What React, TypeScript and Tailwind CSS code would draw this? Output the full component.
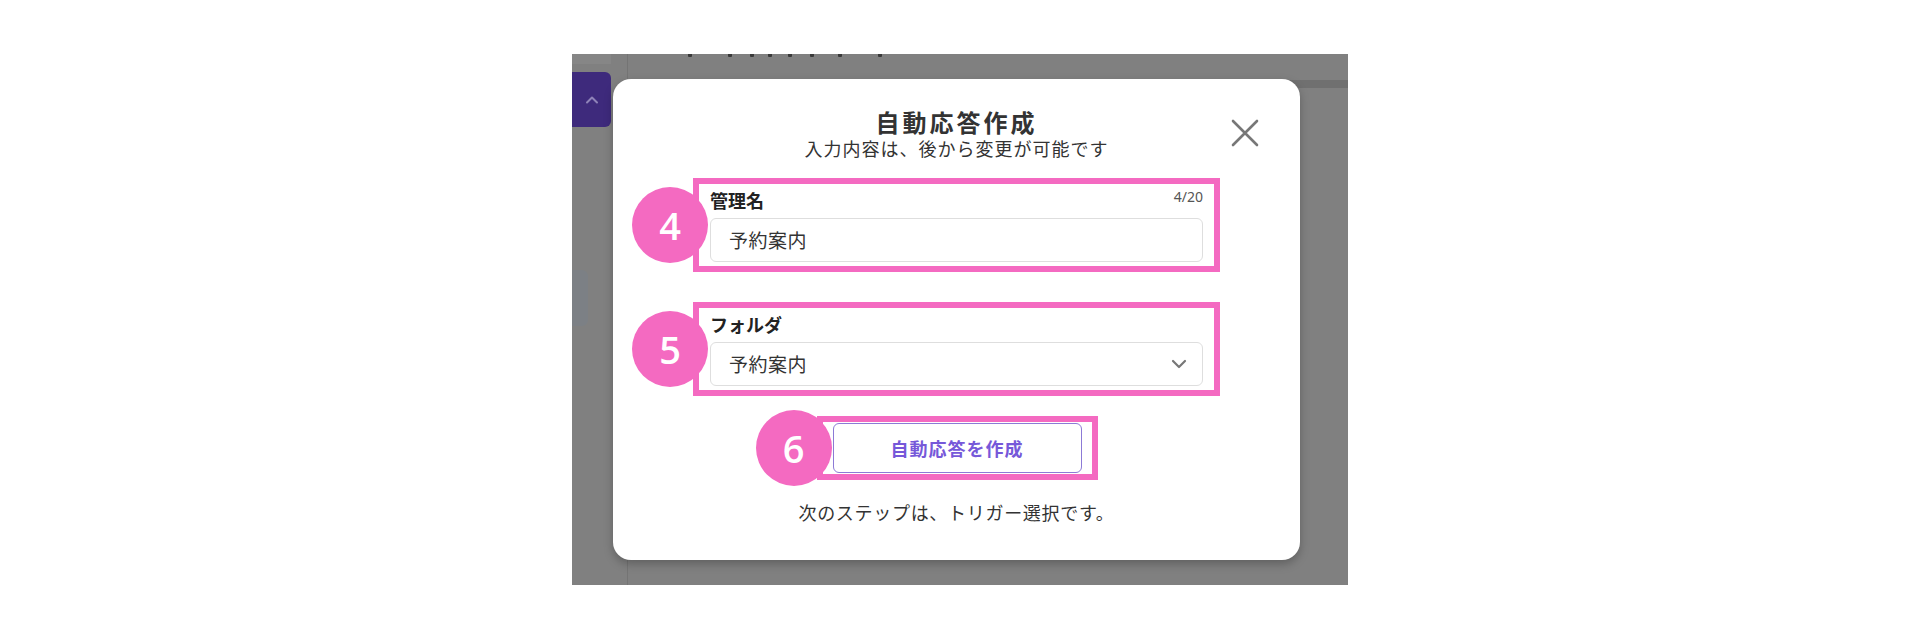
import React from "react";

const jp = "font-['Noto_Sans_CJK_JP','Noto_Sans',sans-serif]";

const Badge: React.FC<{ n: string }> = ({ n }) => (
    <div className="absolute left-[-67px] top-1/2 -translate-y-1/2 w-[76px] h-[76px] rounded-full bg-[#f46ac1] flex items-center justify-center">
        <span className="text-white text-[38px] font-semibold leading-none font-['Open_Sans',sans-serif]">{n}</span>
    </div>
);

const Field: React.FC<{ label: string; counter?: string; select?: boolean; badge: string }> = ({
    label,
    counter,
    select,
    badge,
}) => (
    <div className="relative border-[6px] border-[#f46ac1] px-[11px] pt-[6px] pb-[4px]">
        <Badge n={badge} />
        <div className="flex items-start justify-between h-[20px]">
            <span className="text-[18px] leading-[20px] font-bold text-[#222]">{label}</span>
            {counter && <span className="text-[14px] leading-[16px] text-[#555] font-['Noto_Sans',sans-serif] -mt-[1px]">{counter}</span>}
        </div>
        <div className="mt-[8px] h-[44px] border border-[#dedede] rounded-[6px] flex items-center justify-between pl-[18px] pr-[15px]">
            <span className="text-[19px] text-[#333] tracking-[0.5px]">予約案内</span>
            {select && (
                <svg width="16" height="10" viewBox="0 0 16 10" fill="none">
                    <path d="M2 2l6 6 6-6" stroke="#777" strokeWidth="2.2" strokeLinecap="round" strokeLinejoin="round" />
                </svg>
            )}
        </div>
    </div>
);

// bottoms of a heading that the top edge of the screenshot cuts off
const cutMarks = [0, 40, 62, 80, 100, 122, 150, 190];

const App: React.FC = () => {
    return (
        <div className={`w-[1920px] h-[640px] bg-white overflow-hidden ${jp}`}>
            <div className="relative mx-auto mt-[54px] w-[776px] h-[531px] bg-[#808080] overflow-hidden flex">
                {/* Sidebar */}
                <div className="w-[56px] shrink-0 border-r border-[#747474] flex flex-col">
                    <div className="h-[10px] w-[39px] bg-[#868686]" />
                    <div className="mt-[8px] w-[39px] h-[55px] bg-[#3e2a7c] rounded-r-[6px] flex items-center justify-center">
                        <svg width="14" height="8" viewBox="0 0 14 8" fill="none">
                            <path d="M2 6.5l5-5 5 5" stroke="#8f83b8" strokeWidth="2" strokeLinecap="round" strokeLinejoin="round" />
                        </svg>
                    </div>
                    <div className="mt-[143px] w-[16px] h-[56px] bg-[#7c8085] rounded-r-[6px]" />
                </div>

                {/* Main (behind overlay) */}
                <div className="flex-1 flex flex-col">
                    <div className="relative h-[26px] ml-[60px]">
                        {cutMarks.map((x) => (
                            <div key={x} className="absolute top-0 h-[3px] w-[4px] bg-[#3a3a3a] rounded-b-[1px]" style={{ left: x }} />
                        ))}
                    </div>
                    <div className="h-[8px] bg-[#707070]" />
                </div>

                {/* Modal */}
                <div className="absolute left-[41px] top-[25px] w-[687px] h-[481px] bg-white rounded-[18px] shadow-[0_4px_10px_rgba(0,0,0,0.25)]">
                    <button className="absolute right-[40px] top-[39px] w-[30px] h-[30px] flex items-center justify-center">
                        <svg width="30" height="30" viewBox="0 0 30 30" fill="none">
                            <path d="M3 3l24 24M27 3L3 27" stroke="#777" strokeWidth="2.6" strokeLinecap="round" />
                        </svg>
                    </button>

                    <div className="px-[80px] pt-[29px] flex flex-col">
                        <div className="text-center">
                            <h2 className="text-[24px] leading-[28px] font-bold text-[#333] tracking-[3px]">自動応答作成</h2>
                            <p className="mt-[1px] text-[18px] leading-[22px] text-[#333] tracking-[1px]">入力内容は、後から変更が可能です</p>
                        </div>

                        <div className="mt-[19px]">
                            <Field label="管理名" counter="4/20" badge="4" />
                        </div>
                        <div className="mt-[30px]">
                            <Field label="フォルダ" select badge="5" />
                        </div>

                        <div className="mt-[20px] flex justify-center">
                            <div className="relative ml-[1px] border-[6px] border-[#f46ac1] px-[10px] py-[1px]">
                                <Badge n="6" />
                                <button className="relative w-[249px] h-[50px] bg-white border border-[#8c7ad6] rounded-[6px] text-[18px] font-bold text-[#7658d9] tracking-[1px]">
                                    自動応答を作成
                                </button>
                            </div>
                        </div>

                        <p className="mt-[21px] text-center text-[18px] leading-[22px] text-[#333] tracking-[0.7px]">
                            次のステップは、トリガー選択です。
                        </p>
                    </div>
                </div>
            </div>
        </div>
    );
};

export default App;
